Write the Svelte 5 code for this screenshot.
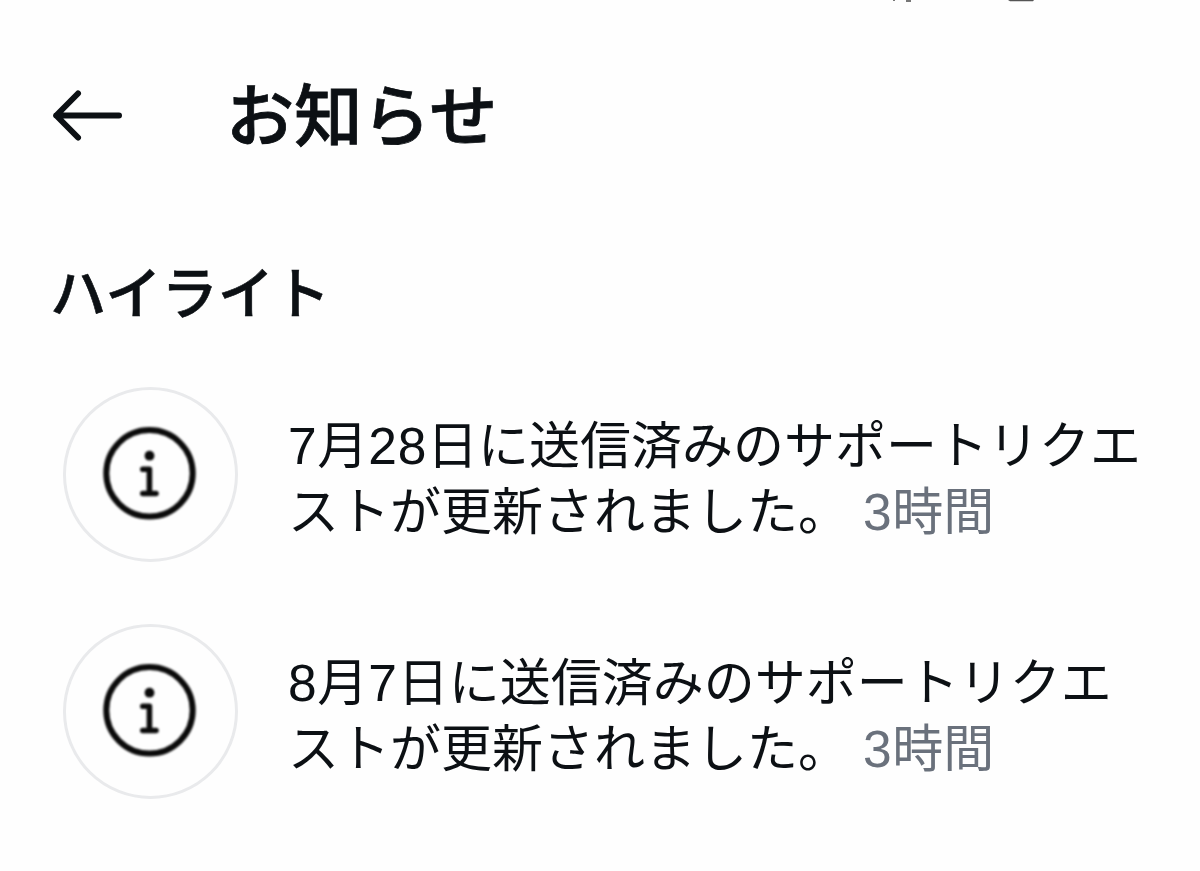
<script>
  const items = [
    { parts: ['7', '月', '28', '日に送信済みのサポートリクエ'] },
    { parts: ['8', '月', '7', '日に送信済みのサポートリクエ'] }
  ];
</script>

<main>
  <div class="cut" aria-hidden="true">
    <svg width="1200" height="3" viewBox="0 0 1200 3">
      <path d="M893 0h2v1h-2zM906 0h5v2h-5z" fill="#777" />
      <path d="M1008 0h26l-1 1.3h-23z" fill="#555" />
    </svg>
  </div>
  <header>
    <svg class="back" width="72" height="54" viewBox="0 0 72 54" fill="none" stroke="#0c1014" stroke-width="6" stroke-linecap="round" stroke-linejoin="round">
      <path d="M28 5.5 6.2 27.5 28 49.5M6.2 27.5H69" />
    </svg>
    <h1>お知らせ</h1>
  </header>
  <h2>ハイライト</h2>
  <ul>
    {#each items as item}
      <li>
        <div class="avatar">
          <svg width="94" height="94" viewBox="0 0 94 94" fill="none" stroke="#0a0a0a">
            <circle cx="46.5" cy="46.3" r="43.2" stroke-width="6" />
            <circle cx="46.5" cy="28.7" r="4.9" fill="#0a0a0a" stroke="none" />
            <path d="M39.8 42.3H46.4V66.5M39.8 66.5H53" stroke-width="5.6" stroke-linecap="round" stroke-linejoin="round" />
          </svg>
        </div>
        <p>{#each item.parts as part, i}{#if i % 2 === 0}<span class="num">{part}</span>{:else}{part}{/if}{/each}<br />ストが更新されました。<span class="time"><span class="num">3</span>時間</span></p>
      </li>
    {/each}
  </ul>
</main>

<style>
  :global(body) { margin: 0; background: #fefefe; }
  main {
    width: 1200px;
    height: 871px;
    overflow: hidden;
    background: #fefefe;
    color: #0c1014;
    font-family: "Noto Sans CJK JP", sans-serif;
  }
  .cut { height: 3px; }
  .cut svg { display: block; }
  header {
    display: flex;
    align-items: center;
    height: 100px;
    padding: 59px 0 0 50px;
  }
  .back { margin: 6px 104px 0 0; flex: none; }
  h1 { margin: 0; font-size: 68.2px; line-height: 100px; font-weight: 500; -webkit-text-stroke: 0.8px #0c1014; }
  h2 { margin: 86px 0 0 50px; font-size: 56.3px; line-height: 84px; font-weight: 500; -webkit-text-stroke: 0.6px #0c1014; }
  ul {
    list-style: none;
    margin: 55px 0 0;
    padding: 0 0 0 63px;
    display: flex;
    flex-direction: column;
    gap: 62px;
  }
  li { display: flex; align-items: center; height: 175px; }
  .avatar {
    box-sizing: border-box;
    width: 175px;
    height: 175px;
    flex: none;
    border: 3px solid #e9eaec;
    border-radius: 50%;
    display: flex;
    align-items: center;
    justify-content: center;
  }
  .avatar svg { margin: -2px 2px 0 0; filter: blur(0.8px); }
  p {
    margin: 0 0 0 50px;
    font-size: 51px;
    line-height: 66px;
    font-weight: 400;
    white-space: nowrap;
  }
  .num {
    font-family: "Liberation Sans", sans-serif;
    font-size: 51.5px;
    letter-spacing: 0.7px;
    line-height: 1;
  }
  .time { color: #6a717c; margin-left: 14px; }
</style>
